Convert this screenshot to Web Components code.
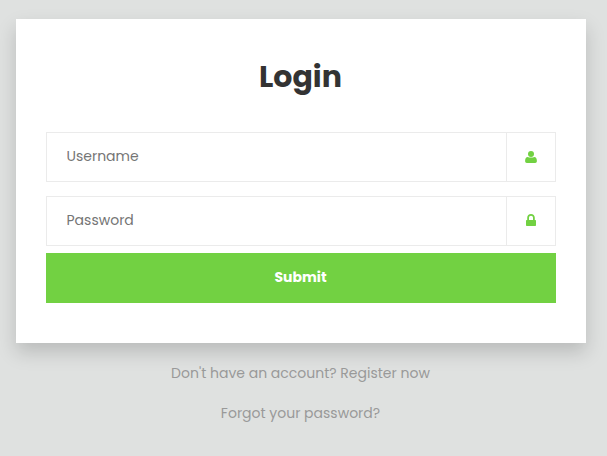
<!DOCTYPE html>
<html lang="en">
<head>
  <meta charset="UTF-8">
  <meta name="viewport" content="width=device-width, initial-scale=1.0">
  <title>Login</title>
  <style>
    body {
      margin: 0;
      min-height: 100vh;
      overflow: hidden;
      background-color: #dfe1e0;
      font-family: Poppins, Inter, sans-serif;
      font-size: 14px;
    }
  </style>
</head>
<body>
  <login-page>
    <login-card heading="Login">
      <login-field type="text" label="Username" icon="user"></login-field>
      <login-field type="password" label="Password" icon="lock"></login-field>
      <submit-button>Submit</submit-button>
    </login-card>
    <page-link slot="links">Don't have an account? Register now</page-link>
    <page-link slot="links">Forgot your password?</page-link>
  </login-page>

  <script>
    const icons = {
      user: '<svg width="12" height="12" viewBox="0 0 12 12"><circle cx="6" cy="3" r="3"/><path d="M2.600 6C1.200 6.200 .1 7.300 .1 10C.1 11.300 .8 12 1.800 12H10.200C11.200 12 11.900 11.300 11.900 10C11.900 7.300 10.800 6.200 9.400 6C8.400 6.400 7.200 6.500 6 6.500S3.600 6.400 2.600 6Z"/></svg>',
      lock: '<svg width="10" height="12" viewBox="0 0 10 12"><path fill-rule="evenodd" d="M1.200 6V3.800C1.200 1.600 2.800 0 5 0S8.800 1.600 8.800 3.800V6H9.300C9.700 6 10 6.300 10 6.700V11.300C10 11.700 9.700 12 9.300 12H.7C.3 12 0 11.700 0 11.300V6.700C0 6.300 .3 6 .7 6ZM3 6H7V3.800C7 2.500 6.200 1.700 5 1.700S3 2.500 3 3.800Z"/></svg>'
    };

    class LoginPage extends HTMLElement {
      constructor() {
        super();
        this.shadow = this.attachShadow({ mode: 'open' });
      }

      connectedCallback() {
        this.shadow.innerHTML = `
          <style>
            :host {
              display: block;
              width: 570px;
              padding: 19px 0 0 16px;
            }

            .links {
              display: flex;
              flex-direction: column;
              align-items: center;
              gap: 20px;
              padding: 20px 1px 0 0;
            }
          </style>
          <slot></slot>
          <div class="links"><slot name="links"></slot></div>
        `;
      }
    }

    class LoginCard extends HTMLElement {
      constructor() {
        super();
        this.shadow = this.attachShadow({ mode: 'open' });
      }

      connectedCallback() {
        this.shadow.innerHTML = `
          <style>
            :host {
              display: block;
              box-sizing: border-box;
              height: 324px;
              padding: 38px 30px 40px;
              background-color: #fff;
              box-shadow: 0 9px 18px rgba(0, 0, 0, .17);
            }

            h1 {
              margin: 0 0 36px;
              padding-right: 1px;
              color: #333;
              font-size: 30px;
              font-weight: 700;
              line-height: 39px;
              text-align: center;
            }
          </style>
          <h1>${this.getAttribute('heading')}</h1>
          <slot></slot>
        `;
      }
    }

    class LoginField extends HTMLElement {
      constructor() {
        super();
        this.shadow = this.attachShadow({ mode: 'open' });
      }

      connectedCallback() {
        const label = this.getAttribute('label');

        this.shadow.innerHTML = `
          <style>
            :host {
              display: flex;
              box-sizing: border-box;
              height: 50px;
              margin-bottom: 14px;
              border: 1px solid #ebebeb;
            }

            :host([icon="lock"]) {
              margin-bottom: 7px;
            }

            input {
              flex: 1;
              min-width: 0;
              padding: 0 20px 2px 19.5px;
              border: none;
              outline: none;
              background: none;
              color: #757575;
              font: inherit;
            }

            input::placeholder {
              color: #757575;
            }

            .icon {
              display: flex;
              width: 48px;
              align-items: center;
              justify-content: center;
              border-left: 1px solid #ebebeb;
              fill: #72d142;
            }

            :host([icon="lock"]) .icon {
              padding-bottom: 2px;
            }
          </style>
          <input type="${this.getAttribute('type')}" placeholder="${label}" aria-label="${label}">
          <span class="icon">${icons[this.getAttribute('icon')]}</span>
        `;
      }
    }

    class SubmitButton extends HTMLElement {
      constructor() {
        super();
        this.shadow = this.attachShadow({ mode: 'open' });
      }

      connectedCallback() {
        this.shadow.innerHTML = `
          <style>
            :host {
              display: block;
            }

            button {
              display: block;
              width: 100%;
              height: 50px;
              padding: 0 1px 2px 0;
              border: none;
              background-color: #72d142;
              color: #fff;
              font: inherit;
              font-weight: 700;
              cursor: pointer;
            }
          </style>
          <button type="submit"><slot></slot></button>
        `;
      }
    }

    class PageLink extends HTMLElement {
      constructor() {
        super();
        this.shadow = this.attachShadow({ mode: 'open' });
      }

      connectedCallback() {
        this.shadow.innerHTML = `
          <style>
            :host {
              display: block;
              line-height: 20px;
            }

            a {
              color: #999;
              text-decoration: none;
            }
          </style>
          <a href="#"><slot></slot></a>
        `;
      }
    }

    customElements.define('login-page', LoginPage);
    customElements.define('login-card', LoginCard);
    customElements.define('login-field', LoginField);
    customElements.define('submit-button', SubmitButton);
    customElements.define('page-link', PageLink);
  </script>
</body>
</html>
